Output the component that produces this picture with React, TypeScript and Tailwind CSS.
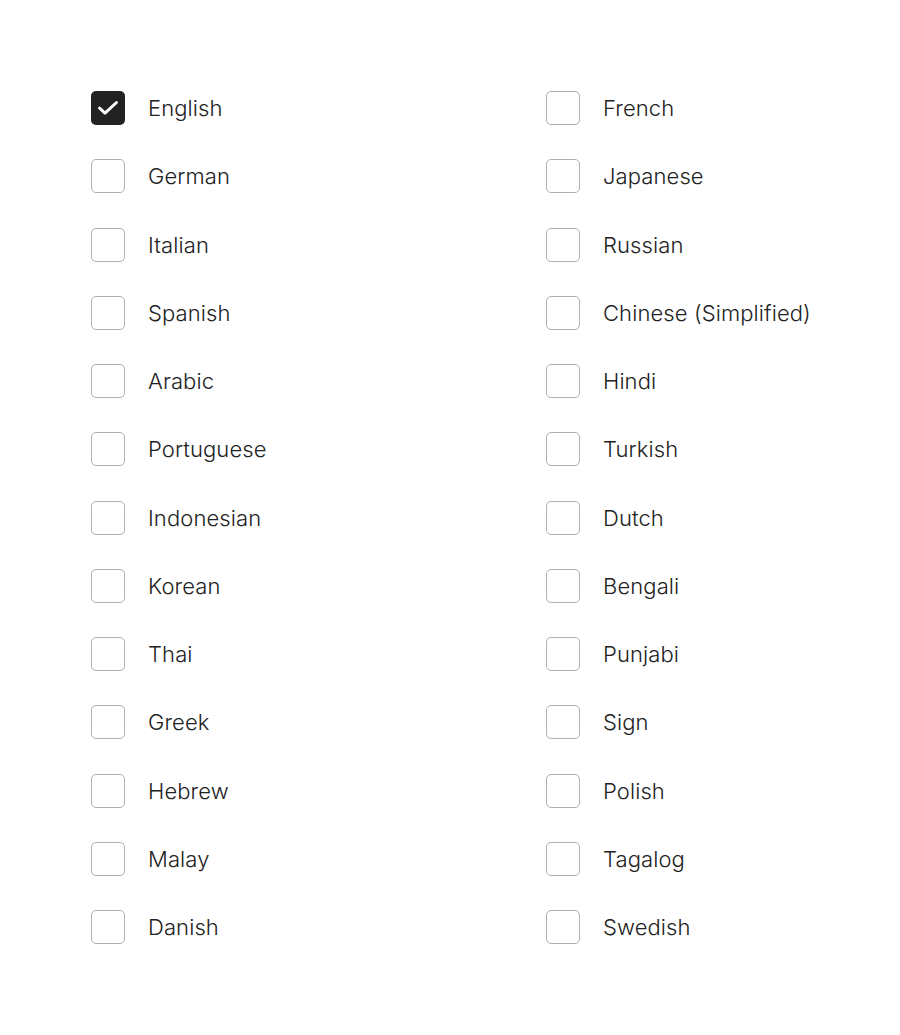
import { useState } from "react";

const LANGUAGES = [
  "English", "French",
  "German", "Japanese",
  "Italian", "Russian",
  "Spanish", "Chinese (Simplified)",
  "Arabic", "Hindi",
  "Portuguese", "Turkish",
  "Indonesian", "Dutch",
  "Korean", "Bengali",
  "Thai", "Punjabi",
  "Greek", "Sign",
  "Hebrew", "Polish",
  "Malay", "Tagalog",
  "Danish", "Swedish",
];

function Checkbox({ checked }: { checked: boolean }) {
  return (
    <span
      className={
        checked
          ? "flex h-[34px] w-[34px] shrink-0 items-center justify-center rounded-[5px] bg-[#222222]"
          : "flex h-[34px] w-[34px] shrink-0 items-center justify-center rounded-[5px] border border-[#b0b0b0] bg-white"
      }
    >
      {checked && (
        <svg viewBox="0 0 22 16" className="h-[16px] w-[22px]" fill="none">
          <path
            d="M2.5 8 L8 13.2 L19.5 2.5"
            stroke="white"
            strokeWidth="3"
            strokeLinecap="round"
            strokeLinejoin="round"
          />
        </svg>
      )}
    </span>
  );
}

export default function App() {
  const [selected, setSelected] = useState<string[]>(["English"]);

  const toggle = (lang: string) =>
    setSelected((s) => (s.includes(lang) ? s.filter((l) => l !== lang) : [...s, lang]));

  return (
    <div
      className="min-h-[1035px] bg-white pl-[91px] pt-[91px] text-[#222222]"
      style={{ fontFamily: "Inter, 'Noto Sans', sans-serif" }}
    >
      <div className="grid grid-cols-[455px_1fr] gap-y-[34.25px]">
        {LANGUAGES.map((lang) => (
          <label
            key={lang}
            className="flex h-[34px] cursor-pointer items-center gap-[23px]"
            onClick={() => toggle(lang)}
          >
            <Checkbox checked={selected.includes(lang)} />
            <span className="text-[22px] font-light leading-none tracking-[0.1px]">{lang}</span>
          </label>
        ))}
      </div>
    </div>
  );
}
